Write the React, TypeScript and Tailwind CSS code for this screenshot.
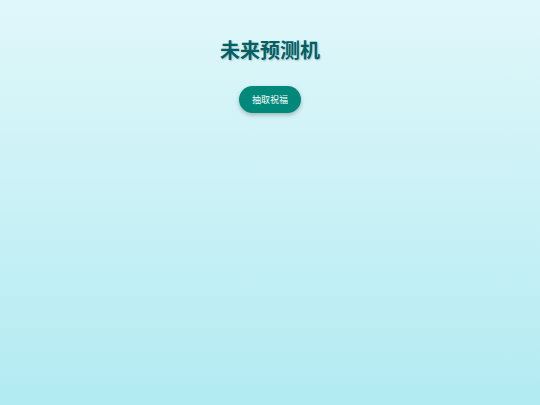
export default function App() {
  return (
    <div
      className="min-h-screen w-full bg-gradient-to-b from-[#e0f7fa] to-[#b2ebf2] flex flex-col items-center pt-[38px]"
      style={{ fontFamily: '"Noto Sans", "Noto Sans CJK SC", sans-serif' }}
    >
      <h1 className="text-[20px] leading-[26px] font-bold text-[#006064] [text-shadow:1px_1px_2px_rgba(0,0,0,0.2)]">
        未来预测机
      </h1>
      <button className="mt-[22px] h-[27px] px-[13px] rounded-full bg-[#00897b] text-white text-[9px] shadow-[0_2px_4px_rgba(0,0,0,0.25)]">
        抽取祝福
      </button>
    </div>
  );
}
